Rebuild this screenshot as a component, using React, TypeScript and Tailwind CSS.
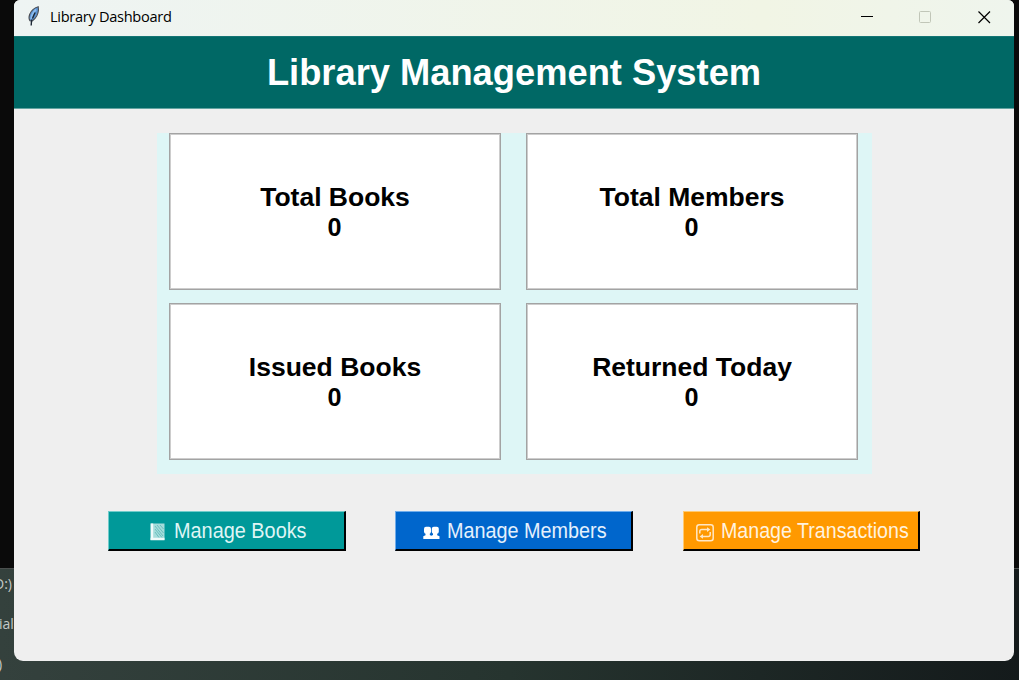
import type { ReactNode } from "react";

function Feather() {
  return (
    <svg width="14" height="22" viewBox="0 0 14 22" className="-mt-1 shrink-0">
      <path d="M11.2 1.8C7.5 2.8 4.2 5.5 2.6 9.5C1.7 12 1.9 14.2 2.9 15.8L5.2 16C8.8 13.5 11.2 9 11.5 5Z" fill="#5b93d3" stroke="#4c4f55" strokeWidth="1.1" />
      <path d="M9 4.5C6 7.5 4.4 11 4.1 14.5" stroke="#8bbcf0" strokeWidth="1.8" fill="none" />
      <path d="M8.2 7.5C7 9.5 6.6 11 5.4 13.5M4.6 14.5L4.2 20.5" stroke="#1d2836" strokeWidth="1.4" fill="none" />
    </svg>
  );
}

function BookIcon() {
  return (
    <svg width="15" height="18" viewBox="0 0 15 18" className="mt-[3px] shrink-0">
      <rect x="0.5" y="0.5" width="14" height="16.5" fill="#a5dcdb" />
      <path d="M2 0.5V17M0.5 16H14.5" stroke="#effafa" strokeWidth="2.4" />
      <path d="M5 3L13 13M5 6L12 14.5M5 9L9 14.5M7 2L13.5 10M10 2L13.5 6" stroke="#4db3b1" strokeWidth="0.7" />
    </svg>
  );
}

function MembersIcon() {
  return (
    <svg width="17" height="14" viewBox="0 0 17 14" fill="white" className="mt-[5px] shrink-0">
      <rect x="1" y="0.8" width="7" height="7" rx="2" />
      <rect x="8.8" y="0.8" width="7" height="7" rx="2" />
      <path d="M0.3 13V10.2L2.5 9.2V6H6.8V9L8.3 9.8L10 9V6H14.2V9.2L16.5 10.2V13Z" />
    </svg>
  );
}

function RepeatIcon() {
  return (
    <svg width="18" height="18" viewBox="0 0 18 18" fill="none" stroke="#ffe7c5" strokeWidth="1.5" className="mt-1 shrink-0">
      <rect x="0.8" y="0.8" width="16.4" height="16" rx="2.5" />
      <path d="M3.8 9.5V7.5Q3.8 5.5 5.8 5.5H12M14.2 8V10.5Q14.2 12.5 12.2 12.5H6" />
      <path d="M11 3.2L14.4 5.6L11 8ZM7 10L3.6 12.4L7 14.8Z" fill="#ffe7c5" stroke="none" />
    </svg>
  );
}

function StatCard({ title }: { title: string }) {
  return (
    <div className="flex flex-col items-center justify-center border border-[#a3a3a3] bg-white text-[26.5px] leading-[30px] font-bold text-black shadow-[inset_0_0_0_1px_#cdcdcd]">
      <div className="whitespace-nowrap">{title}</div>
      <div className="origin-center scale-x-95 pr-0.5">0</div>
    </div>
  );
}

function ActionButton({ className, children }: { className: string; children: ReactNode }) {
  return (
    <button className={`flex h-10 w-[237.6px] items-center border-t border-l border-r-2 border-b-2 border-r-black border-b-black text-[21.3px] leading-6 whitespace-nowrap ${className}`}>
      {children}
    </button>
  );
}

export default function App() {
  return (
    <div className="relative h-[680px] w-[1019px] overflow-hidden bg-[#0a0a0a] font-['Liberation_Sans',Arial,sans-serif]">
      <div className="absolute top-[568px] left-0 h-[112px] w-full border-t border-[#4b4f4e] bg-linear-to-r from-[#34413d] via-[#26342f] to-[#141a1b] font-['Open_Sans',sans-serif] text-[14px] leading-5 text-[#c5c9c8]">
        <div className="absolute top-[5px] left-[-6px]">D:)</div>
        <div className="absolute top-[45px] left-[-1px]">ial</div>
        <div className="absolute top-[85px] left-[-2px]">)</div>
      </div>
      <main className="absolute top-0 left-[14px] flex h-[661px] w-[1000px] flex-col overflow-hidden rounded-t-[6px] rounded-b-[9px] bg-[#efefef]">
        <header className="flex h-9 shrink-0 items-center bg-linear-to-r from-[#eef4f3] via-[#f1f5e5] via-75% to-[#eff5ed] pl-[13px]">
          <Feather />
          <span className="-mt-[3px] ml-[9px] font-['Open_Sans',sans-serif] text-[14.6px] tracking-[-0.3px] text-black">Library Dashboard</span>
          <svg width="130" height="14" viewBox="0 0 130 14" className="-mt-0.5 mr-[23px] ml-auto" fill="none">
            <path d="M0 6.5H12" stroke="black" />
            <rect x="58.5" y="1.5" width="11" height="11" rx="1" stroke="#c1c6b8" />
            <path d="M117.5 1.5L129 13M129 1.5L117.5 13" stroke="black" strokeWidth="1.2" />
          </svg>
        </header>
        <h1 className="flex h-[73px] shrink-0 items-center justify-center border-y border-t-[#147574] border-b-[#63a3a1] bg-[#006865] pt-px text-[36.3px] font-bold whitespace-nowrap text-white">Library Management System</h1>
        <section className="mt-6 ml-[143px] grid h-[341px] w-[715px] shrink-0 grid-cols-2 grid-rows-[157px_157px] gap-x-[25px] gap-y-[13px] bg-[#def6f6] pr-[14px] pl-3">
          <StatCard title="Total Books" />
          <StatCard title="Total Members" />
          <StatCard title="Issued Books" />
          <StatCard title="Returned Today" />
        </section>
        <nav className="mt-[37px] ml-[94px] flex gap-[49.8px]">
          <ActionButton className="border-t-[#70cccb] border-l-[#70cccb] bg-[#009999] pl-[41px] text-[#dff5f5]">
            <BookIcon />
            <span className="mt-px ml-[9px] origin-left scale-x-[0.933]">Manage Books</span>
          </ActionButton>
          <ActionButton className="border-t-[#70adeb] border-l-[#70adeb] bg-[#0066cc] pl-[27px] text-[#e5f0fc]">
            <MembersIcon />
            <span className="mt-px ml-[7px] origin-left scale-x-[0.93]">Manage Members</span>
          </ActionButton>
          <ActionButton className="border-t-[#ffca70] border-l-[#ffca70] bg-[#ff9900] pl-3 text-[#fff2df]">
            <RepeatIcon />
            <span className="mt-px ml-[7px] origin-left scale-x-[0.922]">Manage Transactions</span>
          </ActionButton>
        </nav>
      </main>
    </div>
  );
}
